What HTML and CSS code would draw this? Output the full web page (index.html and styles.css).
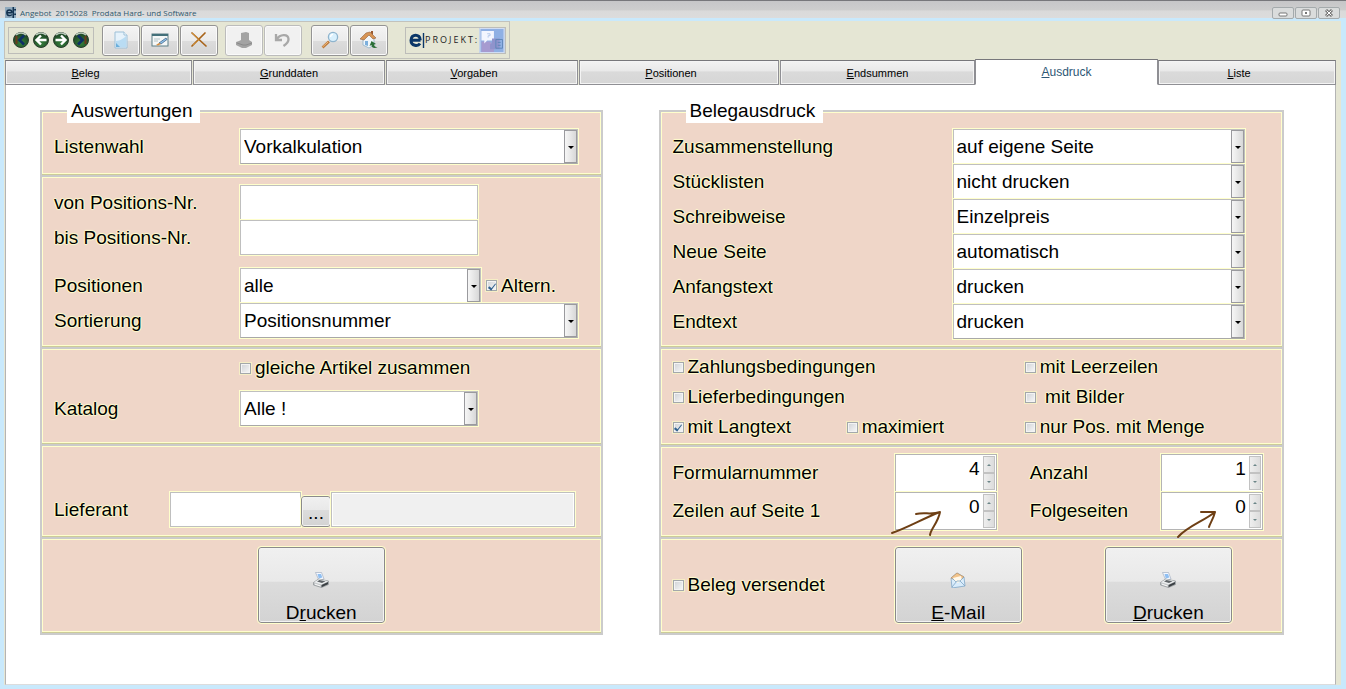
FILE: index.html
```
<!DOCTYPE html>
<html lang="de">
<head>
<meta charset="utf-8">
<title>Angebot 2015028 Prodata Hard- und Software</title>
<link rel="stylesheet" href="styles.css">
</head>
<body>
<svg class="defs" width="0" height="0" aria-hidden="true">
  <defs>
    <radialGradient id="green" cx="50%" cy="70%" r="65%"><stop offset="0" stop-color="#35803c"/><stop offset="1" stop-color="#1d4424"/></radialGradient>
    <symbol id="printer" viewBox="0 0 16 16">
      <path d="M2.500 .5h6l2.500 6.500-5 1.500z" fill="#f4f8ff" stroke="#a3afc2" stroke-width=".7"/>
      <path d="M4.500 2h3.500l1.300 3.500-3.500 1z" fill="#8fbff2"/>
      <path d="M.5 10.500l5-3.500 10 2v3.500l-7 3-8-2.500z" fill="#c4c7c9" stroke="#8b9094" stroke-width=".7"/>
      <path d="M1 10.200l5-3 9 2-6.500 3.300z" fill="#eceeef"/>
      <path d="M4 9.500l2.500-1.500 6 1.200-3.500 1.800z" fill="#5f6468"/>
      <path d="M8.500 13l6.500-3v2.200l-6.500 3z" fill="#3b4044"/>
      <path d="M2 12.200l5.500 1.800" stroke="#fff" stroke-width=".9"/>
    </symbol>
  </defs>
</svg>
<div class="window">
  <header class="titlebar">
    <svg class="app-icon" viewBox="0 0 12 12" aria-hidden="true"><rect width="12" height="12" fill="#8fa9bd"/><path d="M7.500 6.200H2.500M7.500 6.200c0-4-5.500-4-5.500 0 0 3.800 4.500 3.800 5.500 2M9 0v12M10 3h2M10 8h2" fill="none" stroke="#12314f" stroke-width="1.600"/></svg>
    <h1 class="title">Angebot&nbsp; 2015028&nbsp; Prodata Hard- und Software</h1>
    <div class="win-buttons">
      <button class="win-button" aria-label="Minimieren"><svg viewBox="0 0 10 8"><rect x="1" y="4" width="8" height="3" rx="1" fill="#fff" stroke="#777"/></svg></button>
      <button class="win-button" aria-label="Maximieren"><svg viewBox="0 0 10 8"><rect x="1" y="1" width="8" height="6" rx="1" fill="#fff" stroke="#777"/><rect x="4" y="3" width="2" height="2" fill="#777"/></svg></button>
      <button class="win-button" aria-label="Schließen"><svg viewBox="0 0 10 8"><path d="M2 1l6 6M8 1L2 7" stroke="#777" stroke-width="3"/><path d="M2.500 1.500l5 5M7.500 1.500l-5 5" stroke="#fff"/></svg></button>
    </div>
  </header>
  <div class="frame">
    <div class="toolbar" role="toolbar">
      <div class="nav-group">
        <button class="nav-button" aria-label="Erster"><svg viewBox="0 0 16 16"><circle cx="8" cy="8" r="7.500" fill="url(#green)" stroke="#2b3d2e"/><path d="M3 3a7 7 0 0 1 10 0" fill="none" stroke="#b8c8ba" stroke-width="1.500"/><path d="M3.500 4v8" stroke="#6a3b1d" stroke-width="2"/><path d="M11 3.500L6.500 8l4.500 4.500" fill="none" stroke="#0e2f66" stroke-width="2.600"/></svg></button>
        <button class="nav-button" aria-label="Zurück"><svg viewBox="0 0 16 16"><circle cx="8" cy="8" r="7.500" fill="url(#green)" stroke="#2b3d2e"/><path d="M3 3a7 7 0 0 1 10 0" fill="none" stroke="#b8c8ba" stroke-width="1.500"/><path d="M13.500 8H4M8 3.500L3.500 8 8 12.500" fill="none" stroke="#fff" stroke-width="2.400"/></svg></button>
        <button class="nav-button" aria-label="Weiter"><svg viewBox="0 0 16 16"><circle cx="8" cy="8" r="7.500" fill="url(#green)" stroke="#2b3d2e"/><path d="M3 3a7 7 0 0 1 10 0" fill="none" stroke="#b8c8ba" stroke-width="1.500"/><path d="M2.500 8H12M8 3.500l4.500 4.500L8 12.500" fill="none" stroke="#fff" stroke-width="2.400"/></svg></button>
        <button class="nav-button" aria-label="Letzter"><svg viewBox="0 0 16 16"><circle cx="8" cy="8" r="7.500" fill="url(#green)" stroke="#2b3d2e"/><path d="M3 3a7 7 0 0 1 10 0" fill="none" stroke="#b8c8ba" stroke-width="1.500"/><path d="M12.500 4v8" stroke="#6a3b1d" stroke-width="2"/><path d="M5 3.500L9.500 8 5 12.500" fill="none" stroke="#0e2f66" stroke-width="2.600"/></svg></button>
      </div>
      <div class="tool-group">
        <button class="tool" aria-label="Neu"><svg viewBox="0 0 18 18"><path d="M3 1h9l3 3v13H3z" fill="#e6f2fb" stroke="#9dc0d8"/><path d="M12 1v3h3" fill="#fff" stroke="#9dc0d8"/><path d="M4 10c4 0 8-3 10-5v11H4z" fill="#b9dcf3"/><path d="M4 12l4 4H4z" fill="#6aaedb"/></svg></button>
        <button class="tool" aria-label="Bearbeiten"><svg viewBox="0 0 18 18"><rect x="1" y="3" width="16" height="12" fill="#f4f7f7" stroke="#5d7f86"/><path d="M1 4h16" stroke="#43707a" stroke-width="2"/><path d="M3 8h6M3 10h4" stroke="#b4c4c8"/><path d="M8 12l7-5 1 1.500-6 4.500z" fill="#8ec1ea" stroke="#35597d" stroke-width=".7"/><path d="M5 14l3-2 2 1-3 1.500z" fill="#d78b3a"/></svg></button>
        <button class="tool" aria-label="Löschen"><svg viewBox="0 0 18 18"><path d="M2 2l14 13M15 2L2 15" stroke="#a8641a" stroke-width="1.700" stroke-linecap="round"/><path d="M2 2l7 6.500M9 9l-6 5" stroke="#e0a040" stroke-width=".8"/></svg></button>
      </div>
      <div class="tool-group">
        <button class="tool" disabled aria-label="Speichern"><svg viewBox="0 0 18 18"><path d="M6 2l5-1 3 1v7l3 2v3l-6 3H7l-6-3v-3l3-1 2-1z" fill="#a3a3a3"/><path d="M2 12l6 2h3l6-2" fill="none" stroke="#8a8a8a"/></svg></button>
        <button class="tool" disabled aria-label="Rückgängig"><svg viewBox="0 0 18 18"><path d="M2 3v6h6M2.500 8.500C6 3 14 2.500 14.500 8c.2 3-2 5-5 7" fill="none" stroke="#a8a8a8" stroke-width="2.300"/></svg></button>
      </div>
      <div class="tool-group">
        <button class="tool" aria-label="Suchen"><svg viewBox="0 0 18 18"><path d="M1.500 16.500L8 10.500" stroke="#bd7a3c" stroke-width="2.600"/><path d="M1.500 16L7 11" stroke="#f0bd80"/><circle cx="12" cy="6" r="4.600" fill="#d9f0fd" stroke="#8fb4cd" stroke-width="1.300"/><path d="M9.500 6a2.800 2.800 0 0 1 2.500-2.600" stroke="#fff" stroke-width="1.400" fill="none"/></svg></button>
        <button class="tool" aria-label="Startseite"><svg viewBox="0 0 18 18"><path d="M3 8v6l6 3 5-3V7L9 3z" fill="#f1f6fa" stroke="#8fb0c6" stroke-width=".8"/><path d="M0 8l6-6 4-1 6 6-3 1-4-4-5 5z" fill="#d79455" stroke="#94613a" stroke-width=".6"/><path d="M11 0h2v4l-2-2z" fill="#9c5a30"/><path d="M5 10h3v5l-3-1z" fill="#7db0dd"/><path d="M17.500 16.500c-4 1-6 0-6-2.500l-2 1 2-5 4.500 3-2 .5c0 1.500 1.500 2.500 3.500 3z" fill="#2c6f38"/></svg></button>
      </div>
      <div class="logo">
        <svg class="logo-e" viewBox="0 0 16 16" aria-hidden="true"><path d="M11.500 8.200H3.500M11.300 8.200C11.300 1.500 2 1.500 2 8.200c0 6 7 6.300 9 3.300" fill="none" stroke="#0b3768" stroke-width="3"/><path d="M14.500 1v15" stroke="#0b3768" stroke-width="1.400"/></svg>
        <span class="logo-text">PROJEKT:</span>
        <svg class="logo-help" viewBox="0 0 26 26" aria-hidden="true"><rect width="26" height="26" fill="#8fb0e4"/><path d="M2 14h9l4 5v6H2z" fill="#a69bd0"/><path d="M2 3h13v10H8l-3 3v-3H2z" fill="#f3f6ff"/><path d="M13 11h8v11H11v-5c2 0 2-2 2-6z" fill="#8f93cc"/><path d="M17 12h7v9h-7zM19 15h3M19 18h3" fill="none" stroke="#5f86b8"/><path d="M8 6h3v2H9v2" stroke="#b4c8ea" fill="none"/><rect x=".5" y=".5" width="25" height="25" fill="none" stroke="#d3dff5"/></svg>
      </div>
    </div>
    <nav class="tabs" role="tablist">
      <button class="tab tab-first" role="tab"><u>B</u>eleg</button>
      <button class="tab" role="tab"><u>G</u>runddaten</button>
      <button class="tab lead" role="tab"><u>V</u>orgaben</button>
      <button class="tab lead" role="tab"><u>P</u>ositionen</button>
      <button class="tab" role="tab"><u>E</u>ndsummen</button>
      <button class="tab active" role="tab" aria-selected="true"><u>A</u>usdruck</button>
      <button class="tab lead" role="tab"><u>L</u>iste</button>
    </nav>
    <main class="page">
      <fieldset class="panel">
        <legend>Auswertungen</legend>
        <div class="section first">
          <div class="row report-row">
            <label for="liste">Listenwahl</label>
            <span class="select"><select id="liste"><option>Vorkalkulation</option></select></span>
          </div>
        </div>
        <div class="section range">
          <div class="row report-row"><label for="von">von Positions-Nr.</label><input class="field short" id="von" type="text"></div>
          <div class="row report-row"><label for="bis">bis Positions-Nr.</label><input class="field short" id="bis" type="text"></div>
          <div class="row report-row spaced">
            <label for="pos">Positionen</label>
            <div class="inline">
              <span class="select short"><select id="pos"><option>alle</option></select></span>
              <label class="check"><input type="checkbox" checked>Altern.</label>
            </div>
          </div>
          <div class="row report-row">
            <label for="sort">Sortierung</label>
            <span class="select"><select id="sort"><option>Positionsnummer</option></select></span>
          </div>
        </div>
        <div class="section catalog">
          <div class="row report-row low"><span></span><label class="check"><input type="checkbox">gleiche Artikel zusammen</label></div>
          <div class="row report-row">
            <label for="katalog">Katalog</label>
            <span class="select short"><select id="katalog"><option>Alle !</option></select></span>
          </div>
        </div>
        <div class="section supplier">
          <div class="row supplier-row">
            <label for="lieferant">Lieferant</label>
            <input class="field" id="lieferant" type="text">
            <button class="button more" aria-label="Lieferant wählen">...</button>
            <input class="field" type="text" readonly aria-label="Lieferantenname">
          </div>
        </div>
        <div class="section actions center">
          <button class="button big"><svg viewBox="0 0 16 16"><use href="#printer"/></svg><span>D<u>r</u>ucken</span></button>
        </div>
      </fieldset>

      <fieldset class="panel">
        <legend>Belegausdruck</legend>
        <div class="section first options">
          <div class="row print-row"><label for="zus">Zusammenstellung</label><span class="select"><select id="zus"><option>auf eigene Seite</option></select></span></div>
          <div class="row print-row"><label for="stl">Stücklisten</label><span class="select"><select id="stl"><option>nicht drucken</option></select></span></div>
          <div class="row print-row"><label for="schr">Schreibweise</label><span class="select"><select id="schr"><option>Einzelpreis</option></select></span></div>
          <div class="row print-row"><label for="neu">Neue Seite</label><span class="select"><select id="neu"><option>automatisch</option></select></span></div>
          <div class="row print-row"><label for="anf">Anfangstext</label><span class="select"><select id="anf"><option>drucken</option></select></span></div>
          <div class="row print-row"><label for="end">Endtext</label><span class="select"><select id="end"><option>drucken</option></select></span></div>
        </div>
        <div class="section checks">
          <label class="check wide"><input type="checkbox">Zahlungsbedingungen</label>
          <label class="check"><input type="checkbox">mit Leerzeilen</label>
          <label class="check wide"><input type="checkbox">Lieferbedingungen</label>
          <label class="check"><input type="checkbox">&nbsp;mit Bilder</label>
          <label class="check"><input type="checkbox" checked>mit Langtext</label>
          <label class="check"><input type="checkbox">maximiert</label>
          <label class="check"><input type="checkbox">nur Pos. mit Menge</label>
        </div>
        <div class="section numbers">
          <label for="form">Formularnummer</label>
          <div class="number"><input id="form" type="number" value="4"><span class="spin"><button aria-label="Mehr"></button><button aria-label="Weniger"></button></span></div>
          <label for="anz">Anzahl</label>
          <div class="number"><input id="anz" type="number" value="1"><span class="spin"><button aria-label="Mehr"></button><button aria-label="Weniger"></button></span></div>
          <label for="zeilen">Zeilen auf Seite 1</label>
          <div class="number"><input id="zeilen" type="number" value="0"><span class="spin"><button aria-label="Mehr"></button><button aria-label="Weniger"></button></span>
            <svg class="mark mark-left" viewBox="0 0 52 28" aria-hidden="true"><path d="M2 23C17 18 32 9 50 2M26 4c8-2 16 1 24-2M40 25c1-7 8-12 10-23"/></svg>
          </div>
          <label for="folge">Folgeseiten</label>
          <div class="number"><input id="folge" type="number" value="0"><span class="spin"><button aria-label="Mehr"></button><button aria-label="Weniger"></button></span>
            <svg class="mark mark-right" viewBox="0 0 42 30" aria-hidden="true"><path d="M2 27C12 16 28 11 39 2M25 2h14M33 17c1-4 4-7 6-15"/></svg>
          </div>
        </div>
        <div class="section actions send">
          <label class="check"><input type="checkbox">Beleg versendet</label>
          <button class="button big"><svg viewBox="0 0 16 16"><path d="M1 6l6-5 7 4 1 9-13 2z" fill="#d9ecfb" stroke="#7fa6c6" stroke-width=".8"/><path d="M1 6l6-5 7 4-6 5z" fill="#f2c48c" stroke="#b98a58" stroke-width=".6"/><path d="M3 6l8-2 1 4-4 3-4-2z" fill="#fff8ea"/><path d="M2 15l5-6 3 0 5 5M2 6l4 4M14 5l-4 4" fill="none" stroke="#7fa6c6" stroke-width=".8"/></svg><span><u>E</u>-Mail</span></button>
          <button class="button big"><svg viewBox="0 0 16 16"><use href="#printer"/></svg><span><u>D</u>rucken</span></button>
        </div>
      </fieldset>
    </main>
  </div>
</div>
</body>
</html>
```
FILE: styles.css
```
*, *::before, *::after { box-sizing: border-box; }
body {
  margin: 0;
  font-family: "Liberation Sans", Arial, sans-serif;
  font-size: 19px;
  line-height: 22px;
  color: #000;
  background: #c9e9fc;
}
button, input, select { font: inherit; color: inherit; margin: 0; padding: 0; border-radius: 0; }
.defs { position: absolute; }
.window { display: flex; flex-direction: column; min-height: 100vh; padding-bottom: 4px; }

.titlebar {
  display: flex;
  align-items: center;
  gap: 4px;
  height: 18px;
  padding: 6px 6px 0 5px;
  border-top: 1px solid #77777b;
  background: linear-gradient(#c6c6c8, #cdcdcd 50%, #dadada 60%, #dcdcdc);
}
.app-icon { width: 11px; height: 11px; }
.title { flex: 1; margin: 0; font: 8px/11px "Open Sans", sans-serif; color: #2f586e; }
.win-buttons { display: flex; gap: 1px; }
.win-button {
  display: flex; align-items: center; justify-content: center;
  width: 22px; height: 12px;
  border: 1px solid #a4aaac; border-radius: 2px;
  background: #dadcdc;
}
.win-button svg { width: 10px; height: 8px; }

.frame {
  flex: 1;
  display: flex; flex-direction: column;
  margin: 3px 5px 0 4px;
  padding-right: 5px;
  background: #e5e6d4;
}
.toolbar {
  align-self: flex-start;
  display: flex; align-items: center;
  height: 38px;
  padding: 0 3px;
  border: 1px solid #c2c2bc;
}
.nav-group {
  display: flex; align-items: center; gap: 4px;
  height: 27px;
  margin-right: 8px;
  padding: 0 4px;
  border: 1px solid #bdbdb9;
}
.nav-button { width: 16px; height: 16px; border: 0; background: none; }
.nav-button svg { display: block; width: 16px; height: 16px; }
.tool-group { display: flex; gap: 1px; margin-right: 7px; }
.tool-group:nth-of-type(4) { margin-left: 2px; margin-right: 17px; }
.tool {
  display: flex; align-items: center; justify-content: center;
  width: 38px; height: 31px;
  border: 1px solid #949494; border-radius: 3px;
  background: linear-gradient(#f4f4f4, #ebebeb 50%, #dcdcdc 52%, #d4d4d4);
  box-shadow: inset 0 0 0 1px #fafafa;
}
.tool:disabled { border-color: #bcbcbc; background: #f1f1f1; }
.tool svg { width: 18px; height: 18px; }
.logo {
  display: flex; align-items: center;
  height: 27px;
  padding-left: 3px;
  border: 1px solid #bdbdb9;
}
.logo-e { width: 16px; height: 16px; }
.logo-text { font: 9px/12px "Open Sans", sans-serif; letter-spacing: 2px; color: #222; }
.logo-help { width: 26px; height: 25px; }

.tabs {
  display: grid;
  grid-template-columns: 187fr 193fr 193fr 201fr 196fr 183fr 178fr;
  align-items: end;
  height: 26px;
  padding-left: 1px;
}
.tab {
  height: 25px;
  border: 1px solid #8f8f94;
  border-top-color: #77777b;
  font-size: 11px; line-height: 14px;
  background: linear-gradient(#f2f2f2, #e9e9e9 42%, #dadada 48%, #d6d6d6);
  box-shadow: inset 0 0 0 1px #f4f4f4;
}
.tab + .tab { margin-left: 1px; }
.tab-first { padding-right: 26px; }
.lead { padding-right: 16px; }
.tab.active { height: 26px; border-bottom-color: #fff; font-size: 12px; color: #2d5775; background: #fff; box-shadow: none; }
.tab.active, .tab.active + .tab { margin-left: 0; }

.page {
  flex: 1;
  display: grid;
  grid-template-columns: 563fr 626fr;
  align-items: start;
  gap: 56px;
  margin-left: 1px;
  padding: 14px 51px 24px 34px;
  border-right: 1px solid #b4b4b4;
  border-bottom: 1px solid #dcdcdc;
  border-left: 1px solid #b4b4b4;
  background: #fff;
}
.panel {
  min-width: 0;
  margin: 0;
  padding: 0;
  border: 2px solid #cbcbcb;
  background: #efd6c8;
  box-shadow: inset 0 0 0 1px #ffffcc;
}
legend { margin-left: 25px; padding: 0 8px 0 4px; line-height: 24px; background: #fff; }
.panel label { white-space: nowrap; text-shadow: 1px 0 1px #ffc, -1px 0 1px #ffc, 0 1px 1px #ffc, 0 -1px 1px #ffc; }
.section {
  padding: 0 12px;
  border-top: 2px solid #cbcbcb;
  border-bottom: 1px solid #cccc99;
  box-shadow: inset 0 0 0 1px #ffffcc;
}
.first { border-top: 0; padding-top: 6px; padding-bottom: 10px; box-shadow: inset 1px 0 #ffffcc, inset -1px -1px #ffffcc; }
.row { display: grid; align-items: center; height: 35px; }
.report-row { grid-template-columns: 186px minmax(0, 1fr); padding-right: 11px; }
.print-row { grid-template-columns: 280px minmax(0, 1fr); padding-right: 25px; }
.options { padding-bottom: 7px; }
.range { padding-top: 8px; padding-bottom: 8px; }
.spaced { margin-top: 13px; }
.catalog { padding-top: 4px; padding-bottom: 17px; }
.low { height: 30px; margin-bottom: 8px; }
.supplier { padding-top: 46px; padding-bottom: 9px; }
.supplier-row { grid-template-columns: 116px 131px 30px minmax(0, 1fr); padding-right: 14px; }

.field {
  width: 100%; height: 35px;
  padding: 0 4px;
  border: 1px solid #bfbfbf;
  background: #fff;
  outline: 1px solid #ffffcc;
}
.short { max-width: 238px; }
.field:read-only { background: #f0f0f0; box-shadow: inset 0 0 0 1px #fff; }
.select { position: relative; display: flex; height: 35px; width: 100%; outline: 1px solid #ffffcc; }
.select select {
  appearance: none;
  width: 100%;
  padding: 0 18px 0 3px;
  border: 1px solid #bfbfbf;
  border-bottom-color: #a8a8a8;
  background: #fff;
}
.select::before {
  content: "";
  position: absolute; top: 1px; right: 1px; bottom: 1px;
  width: 13px;
  border: 1px solid #9a9a9e;
  background: linear-gradient(90deg, #f6f6f6, #e9e9e9 45%, #d8d8d8);
  pointer-events: none;
}
.select::after {
  content: "";
  position: absolute; top: 17px; right: 4px;
  border: 3px solid transparent;
  border-top-color: #000;
  border-bottom: 0;
  pointer-events: none;
}
.inline { display: flex; align-items: center; gap: 5px; }
.inline .select { flex: 1; }
.inline .select.short { max-width: 241px; }
.check { display: flex; align-items: center; gap: 4px; }
.check input {
  appearance: none;
  flex: none;
  display: grid; place-items: center;
  width: 11px; height: 11px;
  border: 1px solid #a3a8ab;
  background: linear-gradient(135deg, #cfd2d6, #f8f8f8);
  box-shadow: inset 0 0 0 1px #f4f4f4;
  outline: 1px solid #f6eec6;
}
.check input:checked::before {
  content: "";
  width: 4px; height: 8px;
  border: solid #31628f;
  border-width: 0 1px 2px 0;
  rotate: 38deg;
}

.button {
  border: 1px solid #8a8a8a; border-radius: 3px;
  background: linear-gradient(#f0f0f0, #e9e9e9 45%, #dcdcdc 46%, #d3d3d3);
  box-shadow: inset 0 0 0 1px #f3f3f3;
  outline: 1px solid #ffffcc;
}
.more { align-self: end; height: 31px; line-height: 32px; }
.big {
  display: flex; flex-direction: column; align-items: center; justify-content: flex-end;
  gap: 16px;
  width: 127px; height: 76px;
}
.big svg { width: 16px; height: 16px; }
.big span { line-height: 18px; }
.actions { padding-top: 8px; padding-bottom: 9px; }
.center { display: flex; justify-content: center; }

.checks {
  display: grid;
  grid-template-columns: 174fr 178fr 257fr;
  grid-auto-rows: 30px;
  padding: 3px 0 2px 12px;
}
.wide { grid-column: span 2; }
.numbers {
  display: grid;
  grid-template-columns: 222fr 135fr 131fr 121fr;
  grid-auto-rows: 38px;
  align-items: center;
  padding: 7px 0 6px 12px;
}
.number {
  position: relative;
  display: flex;
  width: 102px; height: 38px;
  border: 1px solid #b4b4b4;
  background: #fff;
  outline: 1px solid #ffffcc;
}
.number input {
  appearance: textfield;
  flex: 1; min-width: 0;
  padding: 0 2px 8px 0;
  border: 0;
  text-align: right;
  background: none;
}
.number input::-webkit-inner-spin-button { appearance: none; margin: 0; }
.spin { display: flex; flex-direction: column; width: 12px; margin: 1px; }
.spin button {
  flex: 1;
  display: grid; place-items: center;
  border: 1px solid #c2c2c2;
  background: linear-gradient(90deg, #eee, #dcdcdc);
}
.spin button::before { content: ""; border: 2px solid transparent; border-top: 0; border-bottom-color: #6b8588; }
.spin button + button::before { border-top: 2px solid #6b8588; border-bottom: 0; }
.mark { position: absolute; fill: none; stroke: #6e3f14; stroke-width: 2; stroke-linecap: round; }
.mark-left { left: -6px; top: 17px; width: 52px; height: 28px; }
.mark-right { left: 14px; top: 17px; width: 42px; height: 30px; }
.send {
  display: grid;
  grid-template-columns: 222fr 210fr 177fr;
  align-items: center;
  padding-right: 0;
}
```
